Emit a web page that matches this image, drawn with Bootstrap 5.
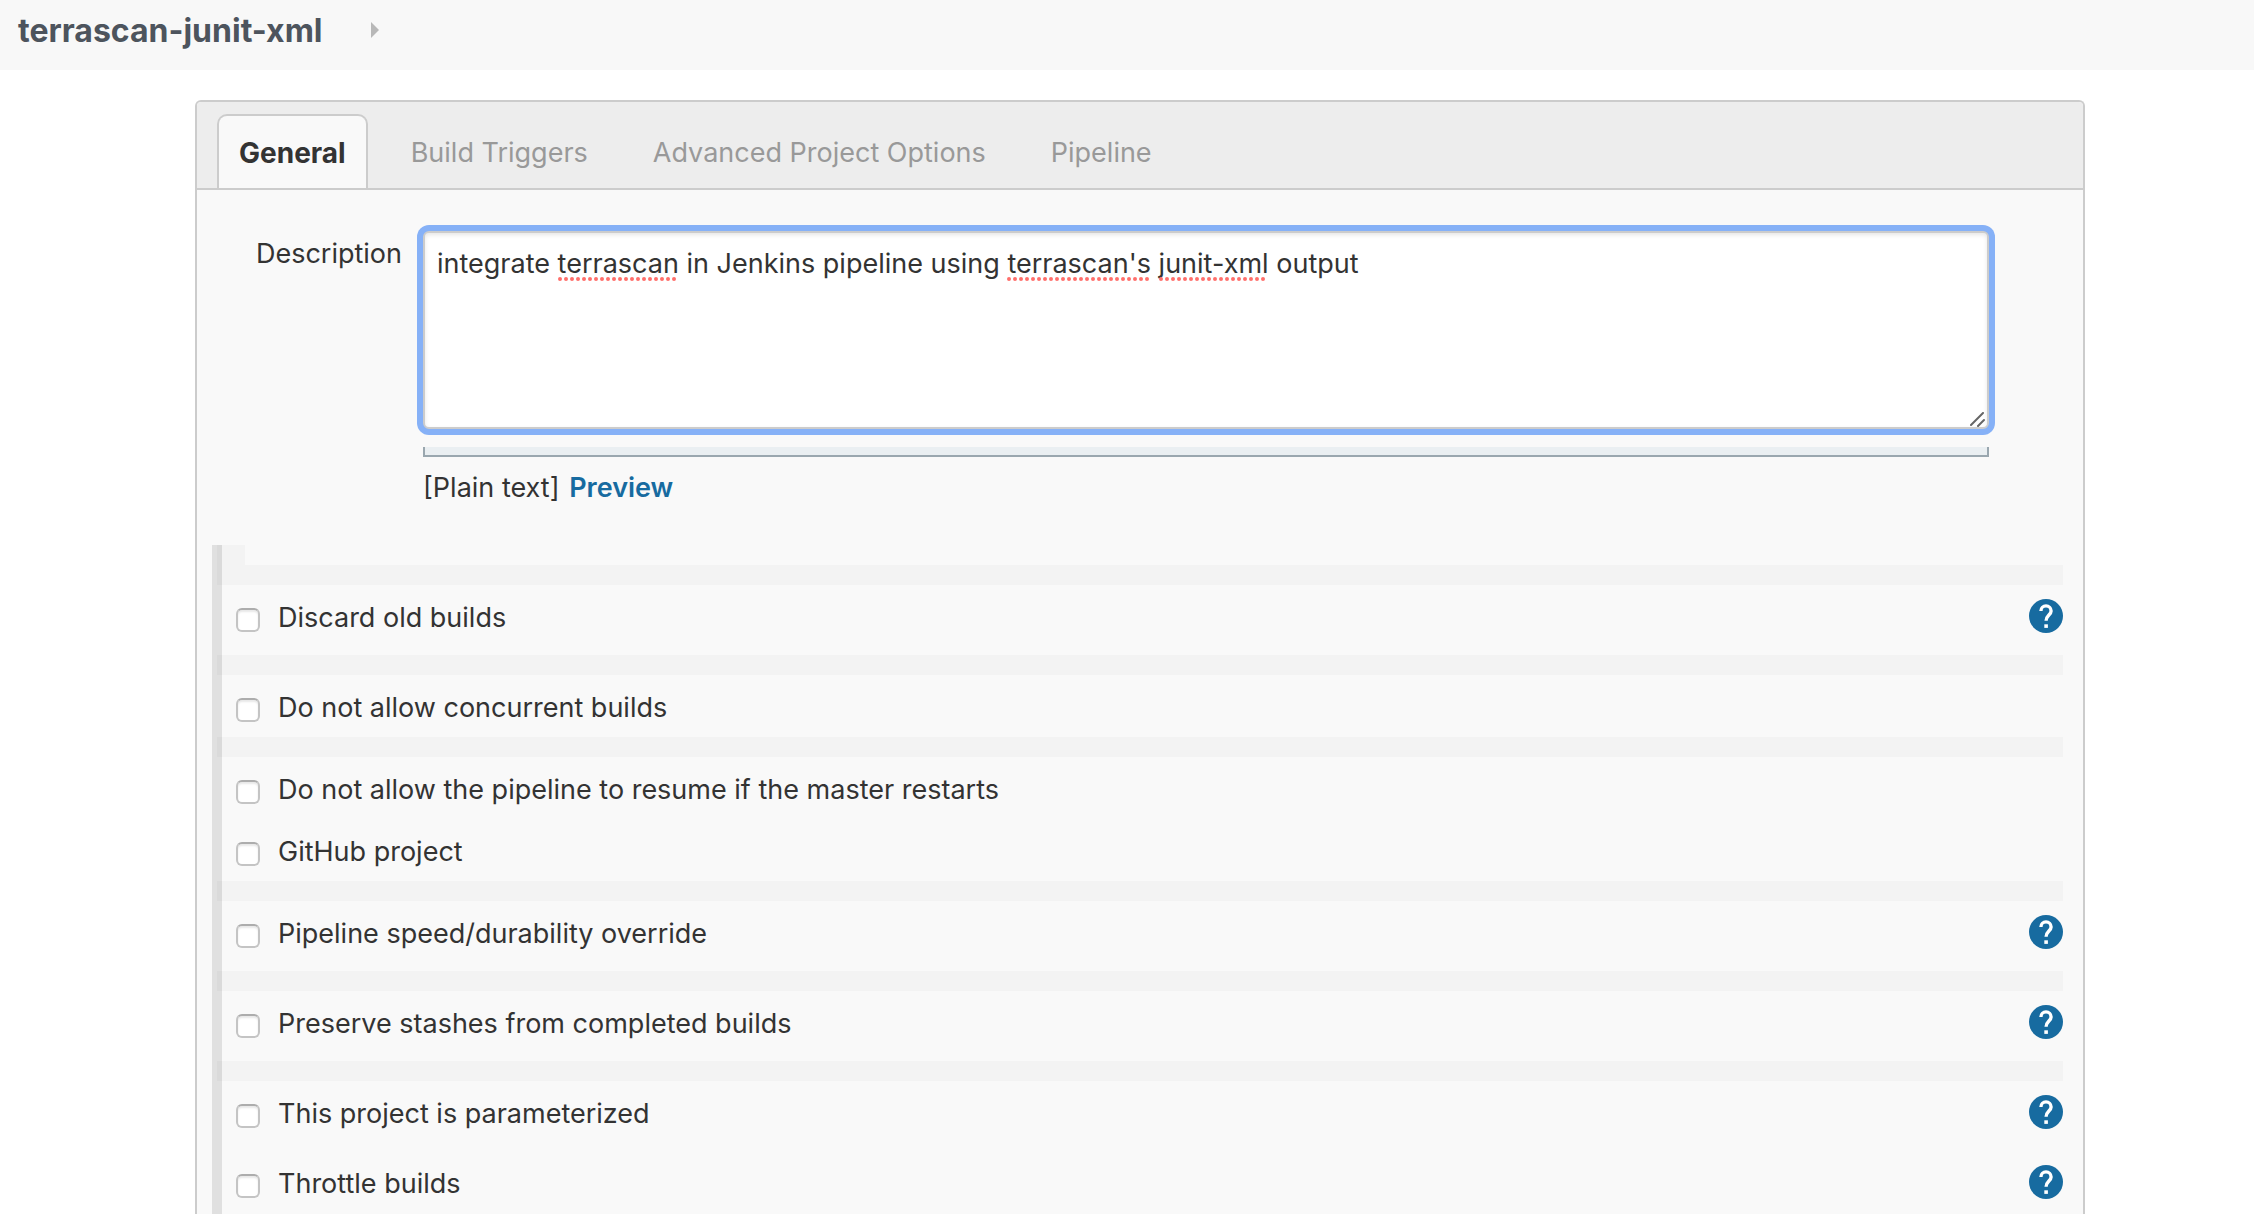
<!DOCTYPE html>
<html lang="en">
<head>
<meta charset="utf-8">
<meta name="viewport" content="width=device-width, initial-scale=1">
<title>terrascan-junit-xml Config</title>
<link href="https://cdn.jsdelivr.net/npm/bootstrap@5.3.0/dist/css/bootstrap.min.css" rel="stylesheet">
<style>
  body { font-family: Inter, "Open Sans", sans-serif; font-size: 27px; line-height: 34px; color: #333; background: #fff; }
  .crumbs { height: 70px; padding: 14px 18px; background: #f8f8f8; }
  .crumbs a { font-size: 32px; font-weight: 700; color: #4d545d; }
  .crumbs svg { width: 8px; height: 16px; margin-left: 48px; }
  .page { padding: 30px 169px 0 195px; }
  .config-panel { border: 2px solid #ccc; border-bottom: 0; border-radius: 6px 6px 0 0; background: #f9f9f9; }
  .config-tabs { background: #ededed; border-bottom: 2px solid #ccc; border-radius: 4px 4px 0 0; padding: 12px 20px 0; gap: 21px; }
  .config-tabs .nav-link { height: 74px; padding: 20px 20px 16px; border: 2px solid transparent; border-bottom: 0; border-radius: 10px 10px 0 0; color: #999; }
  .config-tabs .nav-link.active { background: #f9f9f9; border-color: #ccc; color: #333; font-size: 28px; font-weight: 700; }
  .description-row { padding: 41px 94px 0 0; gap: 21px; }
  .description-label { width: 205px; padding-top: 6px; }
  .description-box { display: block; height: 198px; padding: 14px 12px; font-size: inherit; line-height: inherit; color: #333; background: #fff; border: 2px solid #ccc; border-radius: 6px; resize: none; box-shadow: inset 0 2px 4px rgba(0,0,0,.1), 0 0 0 6px #86b1f7; }
  .description-box:focus { color: #333; border-color: #ccc; box-shadow: inset 0 2px 4px rgba(0,0,0,.1), 0 0 0 6px #86b1f7; }
  .spell-marks { left: 0; top: 45px; width: 100%; height: 6px; pointer-events: none; }
  .grip { right: 4px; bottom: 2px; width: 15px; height: 15px; pointer-events: none; }
  .drag-bar { height: 10px; margin-top: 18px; background: #eaeff2; border: 2px solid #9aa7af; border-top: 0; }
  .format-line { padding: 14px 0 40px; }
  .format-line a { margin-left: 2px; color: #176ba0; font-weight: 600; }
  .option-list { margin: 0 20px 0 15px; border-left: 10px solid #e0e0e0; }
  .option-stub, .option-band { height: 20px; margin-left: -5px; background: rgba(0,0,0,.024); }
  .option-stub { width: 28px; }
  .option-row { height: 62px; padding: 14px 0 0 14px; }
  .option-row.with-help { height: 70px; }
  .option-row .form-check-input { width: 24px; height: 24px; margin: 9px 0 0; border: 2px solid #c4c4c4; border-top-color: #adadad; border-radius: 6px; box-shadow: inset 0 2px 2px #e8e8e8; }
  .option-row label { margin-left: 18px; padding-top: 2px; }
  .help-link svg { display: block; width: 34px; height: 34px; }
</style>
<script src="https://cdn.jsdelivr.net/npm/bootstrap@5.3.0/dist/js/bootstrap.bundle.min.js"></script>
</head>
<body class="vh-100 overflow-hidden">
<svg class="d-none" aria-hidden="true">
  <symbol id="help" viewBox="0 0 34 34">
    <circle cx="17" cy="17" r="17" fill="#176ba0"/>
    <path d="M11.900 12A5.100 5.100 0 0 1 22.100 12C22.100 16 17.100 16.300 17.100 21.800" fill="none" stroke="#fff" stroke-width="3.400"/>
    <rect x="15.300" y="25.300" width="3.600" height="3.600" fill="#fff"/>
  </symbol>
</svg>

<nav class="crumbs d-flex align-items-start" aria-label="breadcrumb">
  <a class="text-decoration-none" href="#">terrascan-junit-xml</a>
  <svg class="mt-2" viewBox="0 0 8 16" aria-hidden="true"><path d="M0 0L8 8L0 16Z" fill="#b8b8b8"/></svg>
</nav>

<main class="page">
  <form class="config-panel">
    <ul class="nav config-tabs">
      <li class="nav-item"><a class="nav-link active" href="#">General</a></li>
      <li class="nav-item"><a class="nav-link" href="#">Build Triggers</a></li>
      <li class="nav-item"><a class="nav-link" href="#">Advanced Project Options</a></li>
      <li class="nav-item"><a class="nav-link" href="#">Pipeline</a></li>
    </ul>

    <div class="description-row d-flex">
      <label class="description-label text-end flex-shrink-0" for="description">Description</label>
      <div class="flex-grow-1">
        <div class="position-relative">
          <textarea class="description-box form-control" id="description" spellcheck="false">integrate terrascan in Jenkins pipeline using terrascan's junit-xml output</textarea>
          <svg class="spell-marks position-absolute" aria-hidden="true">
            <path d="M137 3H255M586 3H728M738 3H846" fill="none" stroke="#ff6f6b" stroke-width="4" stroke-linecap="round" stroke-dasharray="0 6"/>
          </svg>
          <svg class="grip position-absolute" viewBox="0 0 15 15" aria-hidden="true"><path d="M1 13L13 1M8 14L14 8" stroke="#666" stroke-width="2" stroke-linecap="round"/></svg>
        </div>
        <div class="drag-bar"></div>
        <div class="format-line">[Plain text] <a class="text-decoration-none" href="#">Preview</a></div>
      </div>
    </div>

    <div class="option-list">
      <div class="option-stub"></div>
      <div class="option-band"></div>
      <div class="option-row with-help d-flex align-items-start">
        <input class="form-check-input flex-shrink-0" type="checkbox" id="discard"><label for="discard">Discard old builds</label>
        <a class="help-link ms-auto" href="#" aria-label="Help"><svg><use href="#help"/></svg></a>
      </div>
      <div class="option-band"></div>
      <div class="option-row d-flex align-items-start">
        <input class="form-check-input flex-shrink-0" type="checkbox" id="concurrent"><label for="concurrent">Do not allow concurrent builds</label>
      </div>
      <div class="option-band"></div>
      <div class="option-row d-flex align-items-start">
        <input class="form-check-input flex-shrink-0" type="checkbox" id="resume"><label for="resume">Do not allow the pipeline to resume if the master restarts</label>
      </div>
      <div class="option-row d-flex align-items-start">
        <input class="form-check-input flex-shrink-0" type="checkbox" id="github"><label for="github">GitHub project</label>
      </div>
      <div class="option-band"></div>
      <div class="option-row with-help d-flex align-items-start">
        <input class="form-check-input flex-shrink-0" type="checkbox" id="speed"><label for="speed">Pipeline speed/durability override</label>
        <a class="help-link ms-auto" href="#" aria-label="Help"><svg><use href="#help"/></svg></a>
      </div>
      <div class="option-band"></div>
      <div class="option-row with-help d-flex align-items-start">
        <input class="form-check-input flex-shrink-0" type="checkbox" id="stashes"><label for="stashes">Preserve stashes from completed builds</label>
        <a class="help-link ms-auto" href="#" aria-label="Help"><svg><use href="#help"/></svg></a>
      </div>
      <div class="option-band"></div>
      <div class="option-row with-help d-flex align-items-start">
        <input class="form-check-input flex-shrink-0" type="checkbox" id="parameterized"><label for="parameterized">This project is parameterized</label>
        <a class="help-link ms-auto" href="#" aria-label="Help"><svg><use href="#help"/></svg></a>
      </div>
      <div class="option-row with-help d-flex align-items-start">
        <input class="form-check-input flex-shrink-0" type="checkbox" id="throttle"><label for="throttle">Throttle builds</label>
        <a class="help-link ms-auto" href="#" aria-label="Help"><svg><use href="#help"/></svg></a>
      </div>
    </div>
  </form>
</main>
</body>
</html>
